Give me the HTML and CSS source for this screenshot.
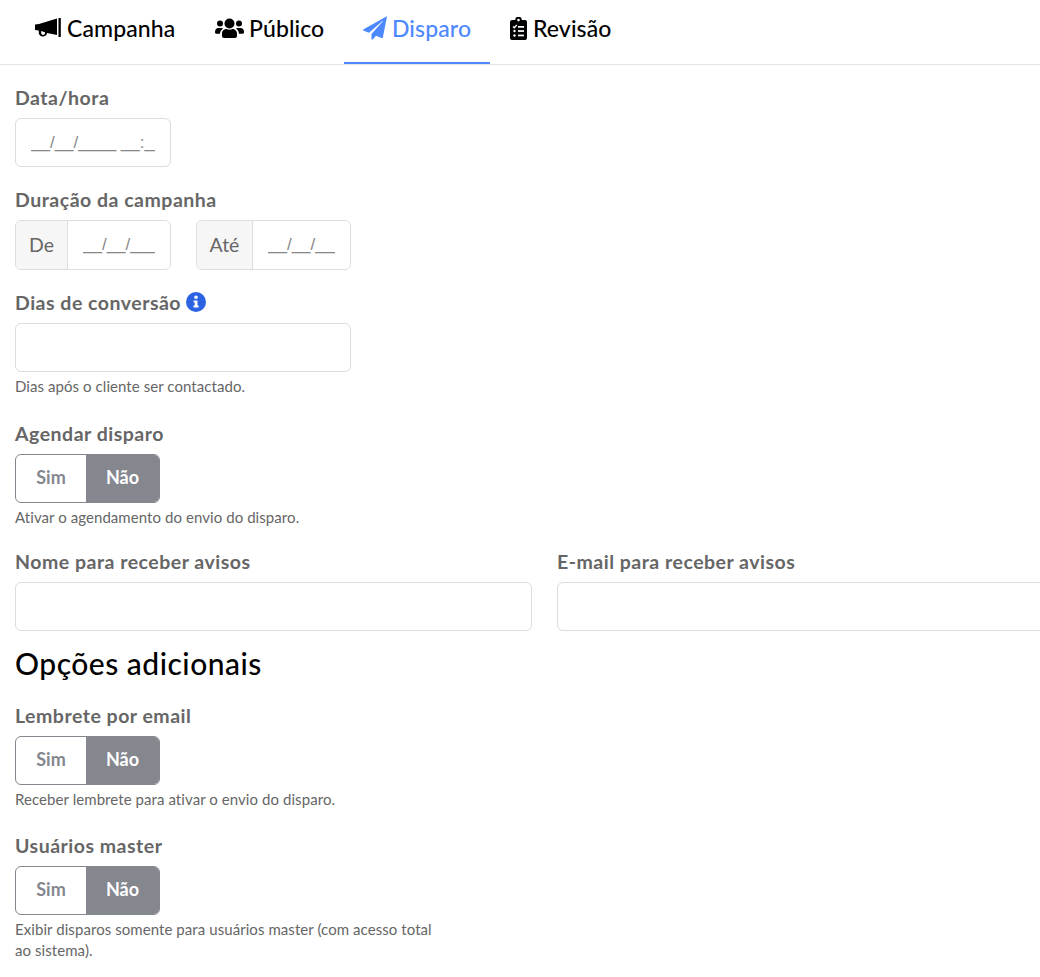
FILE: index.html
```html
<!DOCTYPE html>
<html lang="pt-BR">

<head>
  <meta charset="UTF-8" />
  <meta name="viewport" content="width=device-width, initial-scale=1.0" />
  <link rel="stylesheet" href="styles.css">
</head>

<body>
  <nav class="tabs">
    <a class="tab tab-campaign">
      <svg class="tab-icon" width="26" height="20" viewBox="0 0 26 20">
        <path d="M0 6.500 L4 6 L22 0.500 V17 L12 15 V15.500 A4.300 4.300 0 0 1 3.800 15.500 V12.500 L0 12 Z M6.200 13 V15.500 A2 2 0 0 0 10 15.500 V14.300 Z" fill="currentColor" fill-rule="evenodd" />
        <rect x="23.500" y="0" width="2.300" height="19" fill="currentColor" />
      </svg>
      Campanha
    </a>
    <a class="tab tab-audience">
      <svg class="tab-icon" width="29" height="20" viewBox="0 0 29 20">
        <circle cx="14.500" cy="5.500" r="5" fill="currentColor" />
        <circle cx="5" cy="5.500" r="3" fill="currentColor" />
        <circle cx="24" cy="5.500" r="3" fill="currentColor" />
        <path d="M7 18 V15.500 C7 12 10 11 11.500 11 C13.500 12 15.500 12 17.500 11 C19.500 11 22 12.500 22 15.500 V18 C22 19 21 20 20 20 H9 C8 20 7 19 7 18 Z" fill="currentColor" />
        <path d="M0 14 C0 11.500 1.500 10 3.500 10 H6.500 C7 10 7.500 10.300 8 10.800 C6 12 5.200 13.500 5 15.800 H1.500 C0.500 15.800 0 15 0 14 Z" fill="currentColor" />
        <path d="M29 14 C29 11.500 27.500 10 25.500 10 H22.500 C22 10 21.500 10.300 21 10.800 C23 12 23.800 13.500 24 15.800 H27.500 C28.500 15.800 29 15 29 14 Z" fill="currentColor" />
      </svg>
      Público
    </a>
    <a class="tab tab-send active">
      <svg class="tab-icon" width="24" height="24" viewBox="0 0 24 24">
        <path d="M23.900 0.200 L0.600 13.200 C0 13.600 0.100 14.500 0.700 14.700 L6 16.800 L19.500 5 C19.800 4.800 20.100 5 19.900 5.300 L8.500 18 V22.800 C8.500 23.600 9.500 24 10 23.300 L13 19.700 L18.500 22 C19.100 22.300 19.800 21.900 19.900 21.200 L24 0.600 Z" fill="currentColor" />
      </svg>
      Disparo
    </a>
    <a class="tab tab-review">
      <svg class="tab-icon" width="17" height="23" viewBox="0 0 17 23">
        <path d="M2 3 H5.200 A3.300 3.300 0 0 1 11.800 3 H15 A2 2 0 0 1 17 5 V21 A2 2 0 0 1 15 23 H2 A2 2 0 0 1 0 21 V5 A2 2 0 0 1 2 3 Z M8.500 1.800 A1.300 1.300 0 1 0 8.500 4.400 A1.300 1.300 0 1 0 8.500 1.800 Z" fill="currentColor" fill-rule="evenodd" />
        <path d="M3 9.500 L4.300 10.800 L6.800 8" fill="none" stroke="#fff" stroke-width="1.300" />
        <rect x="8" y="9" width="6" height="1.700" fill="#fff" />
        <circle cx="4.500" cy="14" r="1.200" fill="#fff" />
        <rect x="8" y="13.200" width="6" height="1.700" fill="#fff" />
        <circle cx="4.500" cy="18.500" r="1.200" fill="#fff" />
        <rect x="8" y="17.600" width="6" height="1.700" fill="#fff" />
      </svg>
      Revisão
    </a>
  </nav>

  <main class="form">
    <section class="field">
      <label class="label">Data/hora</label>
      <input class="input input-datetime" type="text" placeholder="__/__/____ __:__" />
    </section>

    <section class="field">
      <label class="label">Duração da campanha</label>
      <div class="range-row">
        <div class="input-group group-de">
          <span class="addon">De</span>
          <input class="group-input" type="text" placeholder="__/__/____" />
        </div>
        <div class="input-group group-ate">
          <span class="addon">Até</span>
          <input class="group-input" type="text" placeholder="__/__/____" />
        </div>
      </div>
    </section>

    <section class="field field-conversion">
      <label class="label">Dias de conversão
        <svg class="info" width="20" height="20" viewBox="0 0 20 20">
          <circle cx="10" cy="10" r="10" fill="#2b63e3" />
          <circle cx="10" cy="5.300" r="1.800" fill="#fff" />
          <path d="M7.600 8.500 H11.500 V13.500 H12.600 V15.500 H7.500 V13.500 H8.700 V10.500 H7.600 Z" fill="#fff" />
        </svg>
      </label>
      <input class="input" type="text" />
      <p class="help">Dias após o cliente ser contactado.</p>
    </section>

    <section class="field">
      <label class="label">Agendar disparo</label>
      <div class="toggle">
        <span class="toggle-opt">Sim</span>
        <span class="toggle-opt selected">Não</span>
      </div>
      <p class="help">Ativar o agendamento do envio do disparo.</p>
    </section>

    <section class="contact-row">
      <div>
        <label class="label">Nome para receber avisos</label>
        <input class="input" type="text" />
      </div>
      <div>
        <label class="label">E-mail para receber avisos</label>
        <input class="input" type="text" />
      </div>
    </section>

    <h2 class="section-title">Opções adicionais</h2>

    <section class="field field-reminder">
      <label class="label">Lembrete por email</label>
      <div class="toggle">
        <span class="toggle-opt">Sim</span>
        <span class="toggle-opt selected">Não</span>
      </div>
      <p class="help">Receber lembrete para ativar o envio do disparo.</p>
    </section>

    <section class="field field-master">
      <label class="label">Usuários master</label>
      <div class="toggle">
        <span class="toggle-opt">Sim</span>
        <span class="toggle-opt selected">Não</span>
      </div>
      <p class="help">Exibir disparos somente para usuários master (com acesso total ao sistema).</p>
    </section>
  </main>
</body>

</html>
```

FILE: styles.css
```css
* {
  box-sizing: border-box;
}

html,
body {
  margin: 0;
  height: 977px;
  overflow: hidden;
}

body {
  background: #fff;
  color: #666;
  font-family: "Lato", "Liberation Sans", sans-serif;
}

.tabs {
  display: flex;
  height: 65px;
  padding-left: 15px;
  border-bottom: 1px solid #e3e3e8;
}

.tab {
  display: flex;
  flex-shrink: 0;
  align-items: center;
  gap: 5px;
  height: 64px;
  padding: 0 0 8px 20px;
  color: #000;
  font-size: 23px;
  font-weight: 500;
  letter-spacing: 0.1px;
  white-space: nowrap;
}

.tab-campaign {
  width: 180px;
  gap: 6px;
}

.tab-audience {
  width: 149px;
}

.tab-send {
  width: 146px;
  padding-left: 19px;
}

.tab-review {
  width: 140px;
  gap: 6px;
}

.tab-icon {
  flex-shrink: 0;
}

.tab.active {
  padding-bottom: 6px;
  color: #4d88ff;
  border-bottom: 2px solid #4d88ff;
}

.form {
  width: 1074px;
  padding: 23px 0 0 15px;
}

.field {
  margin-bottom: 23px;
}

.field-conversion {
  margin-bottom: 27px;
}

.field-conversion + .field {
  margin-bottom: 24px;
}

.field-reminder {
  margin-bottom: 26px;
}

.label {
  display: flex;
  align-items: center;
  gap: 5px;
  height: 20px;
  margin-bottom: 10px;
  padding-bottom: 2px;
  color: #666;
  font-size: 19.5px;
  font-weight: 700;
  letter-spacing: 0.5px;
}

.info {
  margin-bottom: -2px;
  transform: translateY(-1px);
}

.input {
  display: block;
  width: 336px;
  height: 49px;
  padding: 0 15px;
  border: 1px solid #dcdce1;
  border-radius: 6px;
  background: #fff;
  font-family: "Liberation Sans", sans-serif;
  font-size: 17px;
  outline: none;
}

.input::placeholder,
.group-input::placeholder {
  color: #888;
  opacity: 1;
}

.input-datetime {
  width: 156px;
}

.range-row {
  display: flex;
  gap: 25px;
}

.input-group {
  display: flex;
  width: 156px;
  height: 50px;
  border: 1px solid #dcdce1;
  border-radius: 6px;
  overflow: hidden;
}

.group-ate {
  width: 155px;
}

.addon {
  display: flex;
  align-items: center;
  justify-content: center;
  flex-shrink: 0;
  width: 52px;
  padding-bottom: 2px;
  background: #f6f6f6;
  border-right: 1px solid #dcdce1;
  color: #666;
  font-size: 19.5px;
}

.group-ate .addon {
  width: 56px;
}

.group-input {
  flex: 1;
  min-width: 0;
  padding: 0 15px;
  border: 0;
  background: #fff;
  font-family: "Liberation Sans", sans-serif;
  font-size: 17px;
  outline: none;
}

.help {
  margin: 4px 0 0;
  color: #666;
  font-size: 15px;
  letter-spacing: 0.07px;
  line-height: 21px;
}

.toggle {
  display: flex;
  width: 145px;
  height: 49px;
  border: 1px solid #85878f;
  border-radius: 6px;
  overflow: hidden;
}

.toggle-opt {
  display: flex;
  flex: 1;
  align-items: center;
  justify-content: center;
  padding-bottom: 3px;
  color: #85878f;
  font-size: 18px;
  font-weight: 700;
}

.toggle-opt.selected {
  flex: 0 0 73px;
  background: #85878f;
  color: #fff;
}

.contact-row {
  display: grid;
  grid-template-columns: 517px 517px;
  gap: 25px;
}

.contact-row .input {
  width: 100%;
}

.section-title {
  margin: 15px 0 26px;
  color: #000;
  font-size: 30px;
  font-weight: 500;
  letter-spacing: 0.5px;
  line-height: 34px;
}

.field-master .help {
  width: 425px;
}
```
